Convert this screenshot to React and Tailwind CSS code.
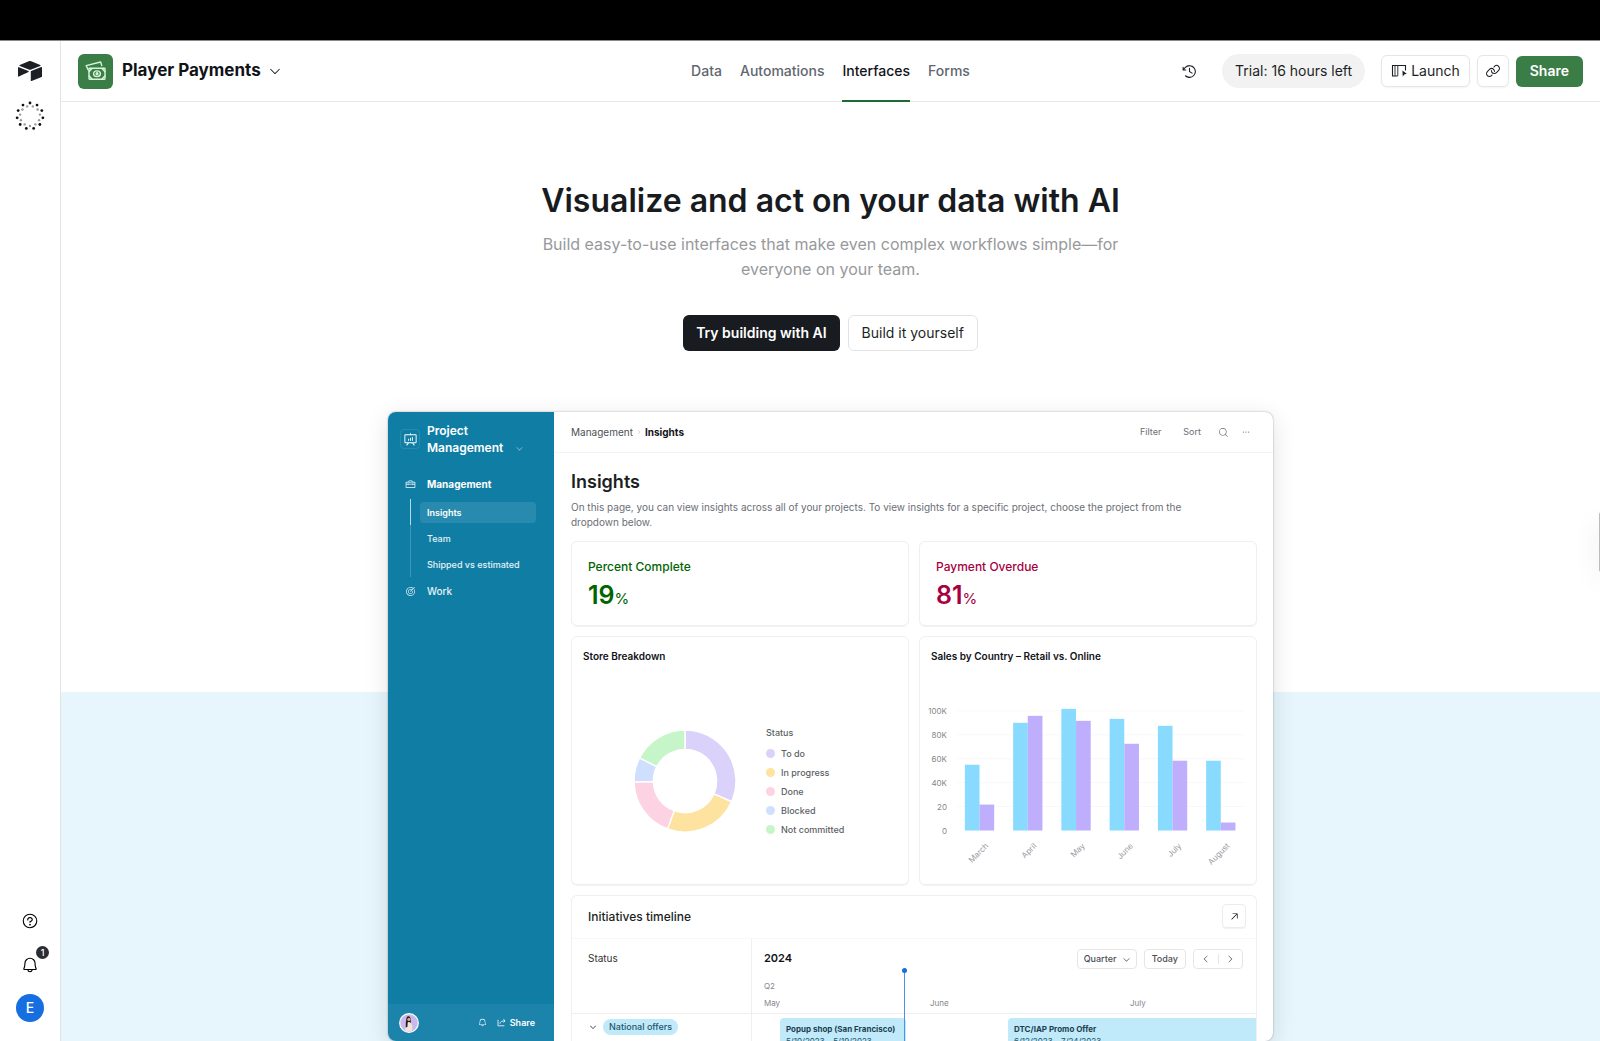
import { SiAirtable } from 'react-icons/si';
import {
    PiArrowUpRight,
    PiBell,
    PiCaretDown,
    PiCaretLeft,
    PiCaretRight,
    PiClockCounterClockwise,
    PiDotsThreeBold,
    PiLink,
    PiMagnifyingGlass,
    PiPresentationChart,
    PiQuestion,
    PiTarget,
    PiToolbox,
} from 'react-icons/pi';

const tabs = ['Data', 'Automations', 'Interfaces', 'Forms'];

const statuses = [
    { label: 'To do', color: '#dad2fb', dot: 'bg-[#dad2fb]', from: 0, to: 114 },
    { label: 'In progress', color: '#fde2a0', dot: 'bg-[#fde2a0]', from: 114, to: 200 },
    { label: 'Done', color: '#fdd3e3', dot: 'bg-[#fdd3e3]', from: 200, to: 269 },
    { label: 'Blocked', color: '#cfdffe', dot: 'bg-[#cfdffe]', from: 269, to: 297 },
    { label: 'Not committed', color: '#c6f5c9', dot: 'bg-[#c6f5c9]', from: 297, to: 360 },
];

const sales = [
    { month: 'March', retail: 66, online: 26 },
    { month: 'April', retail: 108, online: 115 },
    { month: 'May', retail: 122, online: 110 },
    { month: 'June', retail: 112, online: 87 },
    { month: 'July', retail: 105, online: 70 },
    { month: 'August', retail: 70, online: 8 },
];

const ticks = ['100K', '80K', '60K', '40K', '20', '0'];

function polar(r, deg) {
    const a = ((deg - 90) * Math.PI) / 180;
    return [51 + r * Math.cos(a), 51 + r * Math.sin(a)];
}

function slicePath(from, to) {
    const [x1, y1] = polar(50, from);
    const [x2, y2] = polar(50, to);
    const [x3, y3] = polar(31, to);
    const [x4, y4] = polar(31, from);
    return `M${x1} ${y1}A50 50 0 0 1 ${x2} ${y2}L${x3} ${y3}A31 31 0 0 0 ${x4} ${y4}Z`;
}

function DotRing() {
    const dots = [];
    for (let i = 0; i < 11; i++) {
        const a = (i * 2 * Math.PI) / 11;
        const b = a + Math.PI / 11;
        dots.push(
            <circle key={`o${i}`} cx={15 + 13 * Math.sin(a)} cy={15 - 13 * Math.cos(a)} r="1.4" fill="#111" />,
            <circle key={`i${i}`} cx={15 + 10 * Math.sin(b)} cy={15 - 10 * Math.cos(b)} r="1.2" fill="#999" />,
        );
    }
    return <svg className="size-[30px]" viewBox="0 0 30 30">{dots}</svg>;
}

function MoneyIcon() {
    return (
        <svg className="size-[21px]" viewBox="0 0 21 21" fill="none" stroke="#d6f5d8" strokeWidth="1.4" strokeLinejoin="round" strokeLinecap="round">
            <path d="M3.2 9 1.2 4.6 15.6 1 16.8 4.6" />
            <rect x="4" y="7.2" width="16" height="11" rx="0.6" />
            <ellipse cx="12" cy="12.7" rx="3.4" ry="2.8" />
            <circle cx="12" cy="12.7" r="0.9" fill="#d6f5d8" />
            <path d="M4.2 10.4 7 7.4M4.2 15 7 18M19.8 10.4 17 7.4M19.8 15 17 18" />
        </svg>
    );
}

function LaunchIcon() {
    return (
        <svg className="size-4" viewBox="0 0 16 16" fill="none" stroke="#1d1f25" strokeWidth="1.1">
            <path d="M6.5 13H1.5V2.5H14.5V7.5" />
            <path d="M4 2.5V13M6.8 2.5V13" strokeWidth="0.9" />
            <path d="M11.4 7.6 15.8 10.8 13.2 11.4 11.8 13.8Z" fill="#1d1f25" stroke="none" />
        </svg>
    );
}

function ShareIcon() {
    return (
        <svg className="size-[9px]" viewBox="0 0 9 9" fill="none" stroke="currentColor" strokeWidth="0.8">
            <path d="M1 1.8V7.8H7.4" />
            <path d="M2.8 5.8C3.2 3.8 4.8 2.8 8 2.8M6.4 1.2 8.1 2.8 6.4 4.4" />
        </svg>
    );
}

function Avatar() {
    return (
        <svg className="size-5" viewBox="0 0 20 20">
            <circle cx="10" cy="10" r="9.3" fill="#c9b8ec" stroke="#fff" strokeWidth="1.2" />
            <path d="M7.4 5.6C7.6 2.4 11.6 2.6 11.6 6L12 10.5H6.8Z" fill="#2c1c22" />
            <circle cx="9.9" cy="6.4" r="1.6" fill="#d9a58c" />
            <path d="M6.2 17.4C6 12 7 9.6 9.8 9 12.8 9.6 13.8 12 13.2 17.6 11 19 8 18.8 6.2 17.4Z" fill="#f1e4dc" />
            <path d="M7 7.5 8.8 8.5 8.4 14 6.6 14.6Z" fill="#2c1c22" />
        </svg>
    );
}

function Rail() {
    return (
        <aside className="flex w-[61px] shrink-0 flex-col items-center border-r border-[#e3e5e5] bg-white pt-[18px] pb-[19px]">
            <a href="#home" aria-label="Home">
                <SiAirtable className="size-6 text-[#1d1f25]" />
            </a>
            <div className="mt-[18px]">
                <DotRing />
            </div>
            <div className="mt-auto flex flex-col items-center">
                <button aria-label="Help">
                    <PiQuestion className="size-[18px]" />
                </button>
                <button aria-label="Notifications" className="relative mt-[26px]">
                    <PiBell className="size-[18px]" />
                    <span className="absolute -top-[10px] left-[15px] flex size-[13px] items-center justify-center rounded-full bg-[#2a2d31] text-[9px] leading-none font-medium text-white">
                        1
                    </span>
                </button>
                <button className="mt-[20px] flex size-7 items-center justify-center rounded-full bg-[#166ee1] text-sm font-medium text-white">
                    E
                </button>
            </div>
        </aside>
    );
}

function TopBar() {
    return (
        <header className="grid h-[61px] shrink-0 grid-cols-[1fr_auto_1fr] border-b border-[#e8e8e8] px-[17px]">
            <div className="flex items-center">
                <div className="flex size-[35px] items-center justify-center rounded-md bg-[#3b7d47]">
                    <MoneyIcon />
                </div>
                <button className="ml-[9px] flex items-center gap-[7px] text-[17px] font-bold text-[#111318]">
                    Player Payments
                    <PiCaretDown className="size-[14px]" />
                </button>
            </div>

            <nav className="flex gap-[18px] text-sm font-medium text-[#616670]">
                {tabs.map((tab) => (
                    <a
                        key={tab}
                        href={`#${tab.toLowerCase()}`}
                        className={
                            tab === 'Interfaces'
                                ? '-mb-px flex items-center border-b-2 border-[#1f6b35] text-[#111318]'
                                : 'flex items-center'
                        }
                    >
                        {tab}
                    </a>
                ))}
            </nav>

            <div className="flex items-center justify-end text-sm text-[#1d1f25]">
                <button aria-label="History" className="mr-6">
                    <PiClockCounterClockwise className="size-[17px]" />
                </button>
                <span className="mr-4 flex h-[34px] items-center rounded-full bg-[#f2f2f2] px-[13px]">
                    Trial: 16 hours left
                </span>
                <button className="mr-[7px] flex h-8 items-center gap-1 rounded-md border border-[#e6e6e6] px-[9px] shadow-xs">
                    <LaunchIcon />
                    Launch
                </button>
                <button aria-label="Copy link" className="mr-[7px] flex size-8 items-center justify-center rounded-md border border-[#e6e6e6] shadow-xs">
                    <PiLink className="size-4" />
                </button>
                <button className="h-[31px] rounded-md bg-[#3b7d47] px-[14px] font-semibold text-white">Share</button>
            </div>
        </header>
    );
}

function Sidebar() {
    return (
        <div className="flex w-[166px] shrink-0 flex-col bg-[#107da5] text-white">
            <div className="flex px-3 pt-[10px]">
                <div className="mt-[7px] flex size-5 items-center justify-center rounded border border-white/10">
                    <PiPresentationChart className="size-[15px]" />
                </div>
                <div className="ml-[7px] text-xs leading-[17px] font-semibold">
                    Project
                    <br />
                    Management
                </div>
                <PiCaretDown className="mt-[22px] ml-[12px] size-[9px] opacity-60" />
            </div>

            <div className="mt-[18px] flex h-5 items-center pl-[17px] text-[10px] font-bold">
                <PiToolbox className="mr-[11px] size-[11px]" />
                Management
            </div>
            <div className="mt-[5px] ml-[22px] flex text-[9px] font-medium text-white/90">
                <div className="w-px">
                    <div className="h-[26px] bg-white/70" />
                    <div className="h-[52px] bg-white/20" />
                </div>
                <div className="ml-[9px] flex w-[116px] flex-col gap-[5px] pt-[3px]">
                    <a href="#insights" className="flex h-[21px] items-center rounded bg-white/10 px-[7px] font-semibold text-white">
                        Insights
                    </a>
                    <a href="#team" className="flex h-[21px] items-center px-[7px]">
                        Team
                    </a>
                    <a href="#shipped" className="flex h-[21px] items-center px-[7px]">
                        Shipped vs estimated
                    </a>
                </div>
            </div>
            <div className="mt-1 flex h-5 items-center pl-[17px] text-[10px] font-medium text-white/90">
                <PiTarget className="mr-[11px] size-[11px]" />
                Work
            </div>

            <div className="mt-auto flex h-[37px] shrink-0 items-center bg-white/5 pr-[19px] pl-[11px]">
                <Avatar />
                <PiBell className="mr-[10px] ml-auto size-[9px]" />
                <ShareIcon />
                <span className="ml-1 text-[9px] font-semibold">Share</span>
            </div>
        </div>
    );
}

function Metric({ label, value, color }) {
    return (
        <div className={`h-[85px] rounded-md border border-[#efefef] px-4 pt-4 shadow-2xs ${color}`}>
            <div className="text-xs leading-[18px] font-medium">{label}</div>
            <div className="text-[25px] leading-[38px] font-semibold">
                {value}
                <span className="text-[15px] font-normal">%</span>
            </div>
        </div>
    );
}

function StoreBreakdown() {
    return (
        <div className="h-[249px] rounded-md border border-[#efefef] shadow-2xs">
            <h3 className="px-[11px] pt-[10px] text-[10px] leading-[18px] font-semibold text-[#111318]">
                Store Breakdown
            </h3>
            <div className="mt-[64px] flex items-start pl-[61px]">
                <svg className="size-[104px]" viewBox="0 0 102 102">
                    {statuses.map((s) => (
                        <path key={s.label} d={slicePath(s.from, s.to)} fill={s.color} stroke="#fff" strokeWidth="1.4" />
                    ))}
                </svg>
                <div className="-mt-1 ml-[29px] text-[9px] leading-[19px] font-medium text-[#5c5f65]">
                    <div className="mb-[3px] leading-[16px]">Status</div>
                    {statuses.map((s) => (
                        <div key={s.label} className="flex items-center gap-[6px]">
                            <span className={`size-[9px] rounded-full ${s.dot}`} />
                            {s.label}
                        </div>
                    ))}
                </div>
            </div>
        </div>
    );
}

function SalesChart() {
    return (
        <div className="h-[249px] rounded-md border border-[#efefef] shadow-2xs">
            <h3 className="px-[11px] pt-[10px] text-[10px] leading-[18px] font-semibold text-[#111318]">
                Sales by Country – Retail vs. Online
            </h3>
            <svg className="mt-px w-full" viewBox="0 0 337 210">
                {ticks.map((tick, i) => (
                    <g key={tick}>
                        {i < 5 && <path d={`M38 ${45 + i * 24}H326`} stroke="#f8f8f8" />}
                        <text x="27" y={48 + i * 24} textAnchor="end" className="fill-[#85878c] text-[8px]">
                            {tick}
                        </text>
                    </g>
                ))}
                {sales.map((s, i) => {
                    const x = 45 + i * 48.4;
                    return (
                        <g key={s.month}>
                            <rect x={x} y={165 - s.retail} width="14.7" height={s.retail} fill="#88dbff" />
                            <rect x={x + 14.7} y={165 - s.online} width="14.7" height={s.online} fill="#bfaefc" />
                            <text
                                textAnchor="end"
                                transform={`translate(${x + 24} 181) rotate(-45)`}
                                className="fill-[#97999e] text-[8px]"
                            >
                                {s.month}
                            </text>
                        </g>
                    );
                })}
            </svg>
        </div>
    );
}

function Timeline() {
    return (
        <div className="flex min-h-0 flex-1 flex-col overflow-hidden rounded-t-md border border-b-0 border-[#efefef]">
            <div className="flex h-[43px] shrink-0 items-center justify-between border-b border-[#f8f8f8] pr-[10px] pl-4">
                <h3 className="text-xs font-medium text-[#1d1f25]">Initiatives timeline</h3>
                <button aria-label="Expand" className="mb-[2px] flex size-6 items-center justify-center rounded border border-[#ececec] shadow-2xs">
                    <PiArrowUpRight className="size-[11px]" />
                </button>
            </div>
            <div className="flex min-h-0 flex-1">
                <div className="w-[180px] shrink-0 border-r border-[#efefef]">
                    <div className="h-[75px] border-b border-[#efefef] pt-[11px] pl-4 text-[10px] leading-4 text-[#333]">
                        Status
                    </div>
                    <div className="flex items-center gap-[6px] pt-[5px] pl-[17px]">
                        <PiCaretDown className="size-2" />
                        <span className="rounded-full bg-[#c0e9fa] px-[6px] text-[9px] leading-4 font-medium text-[#24566b]">
                            National offers
                        </span>
                    </div>
                </div>
                <div className="relative min-w-0 flex-1">
                    <div className="h-[75px] border-b border-[#efefef] pl-3">
                        <div className="flex h-[39px] items-center justify-between pr-[13px]">
                            <span className="text-[11px] font-semibold text-[#111318]">2024</span>
                            <div className="flex gap-[7px] text-[9px] font-medium text-[#4c4f55]">
                                <div className="relative">
                                    <select
                                        aria-label="Range"
                                        className="h-5 w-[60px] appearance-none rounded border border-[#e6e6e6] bg-white pl-[6px]"
                                    >
                                        <option>Quarter</option>
                                    </select>
                                    <PiCaretDown className="pointer-events-none absolute top-[6px] right-[6px] size-[9px]" />
                                </div>
                                <button className="h-5 rounded border border-[#e6e6e6] px-[7px]">Today</button>
                                <div className="flex h-5 w-[50px] items-center rounded border border-[#e6e6e6]">
                                    <button aria-label="Previous" className="flex flex-1 justify-center border-r border-[#e6e6e6]">
                                        <PiCaretLeft className="size-[10px]" />
                                    </button>
                                    <button aria-label="Next" className="flex flex-1 justify-center">
                                        <PiCaretRight className="size-[10px]" />
                                    </button>
                                </div>
                            </div>
                        </div>
                        <div className="text-[8px] leading-[17px] text-[#85878c]">Q2</div>
                        <div className="grid grid-cols-[166px_200px_1fr] text-[8px] leading-[17px] text-[#85878c]">
                            <span>May</span>
                            <span>June</span>
                            <span>July</span>
                        </div>
                    </div>
                    <div className="absolute top-[79px] left-[28px] w-[126px] rounded bg-[#c0e9fa] pt-[5px] pl-[6px] text-[8px] leading-3 whitespace-nowrap text-[#24566b]">
                        <div className="font-bold text-[#1c3f50]">Popup shop (San Francisco)</div>
                        5/10/2023 – 5/19/2023
                    </div>
                    <div className="absolute top-[79px] right-0 left-[256px] rounded-l bg-[#c0e9fa] pt-[5px] pl-[6px] text-[8px] leading-3 text-[#24566b]">
                        <div className="font-bold text-[#1c3f50]">DTC/IAP Promo Offer</div>
                        6/12/2023 – 7/24/2023
                    </div>
                    <div className="absolute top-[31px] bottom-0 left-[152px] w-px bg-[#4f8fe8]" />
                    <div className="absolute top-[29px] left-[150px] size-[5px] rounded-full bg-[#166ee1]" />
                </div>
            </div>
        </div>
    );
}

function Preview() {
    return (
        <section className="mt-[61px] flex min-h-0 w-full max-w-[885px] flex-1 overflow-hidden rounded-lg bg-white shadow-[0_0_2px_rgba(0,0,0,0.35),0_6px_24px_rgba(0,0,0,0.12)]">
            <Sidebar />
            <div className="flex min-w-0 flex-1 flex-col">
                <div className="flex h-[41px] shrink-0 items-center justify-between border-b border-[#f3f3f3] pr-[22px] pl-[17px]">
                    <div className="flex items-center gap-[3px] text-[10px] text-[#4c4f55]">
                        Management
                        <PiCaretRight className="size-[6px] text-[#bbb]" />
                        <span className="font-bold text-[#111318]">Insights</span>
                    </div>
                    <div className="flex items-center text-[9px] text-[#6b6e75]">
                        <button className="mr-[22px]">Filter</button>
                        <button className="mr-[17px]">Sort</button>
                        <button aria-label="Search" className="mr-[12px]">
                            <PiMagnifyingGlass className="size-[11px]" />
                        </button>
                        <button aria-label="More">
                            <PiDotsThreeBold className="size-[10px]" />
                        </button>
                    </div>
                </div>
                <div className="flex min-h-0 flex-1 flex-col pt-[17px] pr-4 pl-[17px]">
                    <h2 className="text-lg leading-6 font-semibold text-[#1d1f25]">Insights</h2>
                    <p className="mt-[6px] max-w-[640px] text-[10px] leading-[15px] text-[#6b6e75]">
                        On this page, you can view insights across all of your projects. To view insights for a specific
                        project, choose the project from the dropdown below.
                    </p>
                    <div className="mt-[11px] mb-[10px] grid shrink-0 grid-cols-2 gap-[10px]">
                        <Metric label="Percent Complete" value="19" color="text-[#006400]" />
                        <Metric label="Payment Overdue" value="81" color="text-[#a8003f]" />
                        <StoreBreakdown />
                        <SalesChart />
                    </div>
                    <Timeline />
                </div>
            </div>
        </section>
    );
}

export default function App() {
    return (
        <div className="flex h-screen flex-col overflow-hidden bg-white font-['Inter',sans-serif]">
            <div className="h-[41px] shrink-0 border-b border-[#888] bg-black" />
            <div className="flex min-h-0 flex-1">
                <Rail />
                <div className="flex min-w-0 flex-1 flex-col">
                    <TopBar />
                    <main className="flex min-h-0 flex-1 flex-col items-center bg-[linear-gradient(to_bottom,#fff_590px,#e7f6fd_590px)] pt-[78px]">
                        <h1 className="text-[32px] leading-[42px] font-semibold text-[#181b20]">
                            Visualize and act on your data with AI
                        </h1>
                        <p className="mt-[10px] max-w-[600px] text-center text-base leading-[25px] text-[#97999b]">
                            Build easy-to-use interfaces that make even complex workflows simple—for everyone on your
                            team.
                        </p>
                        <div className="mt-[33px] flex gap-2 text-sm">
                            <button className="h-9 rounded-md bg-[#181b20] px-[13px] font-semibold text-white">
                                Try building with AI
                            </button>
                            <button className="h-9 rounded-md border border-[#e3e3e3] bg-white px-[13px] text-[#1d1f25]">
                                Build it yourself
                            </button>
                        </div>
                        <Preview />
                    </main>
                </div>
            </div>
            <div className="fixed top-[512px] -right-1 h-[60px] w-[5px] rounded bg-[#bbb] shadow-[0_8px_24px_rgba(0,0,0,0.15)]" />
        </div>
    );
}
